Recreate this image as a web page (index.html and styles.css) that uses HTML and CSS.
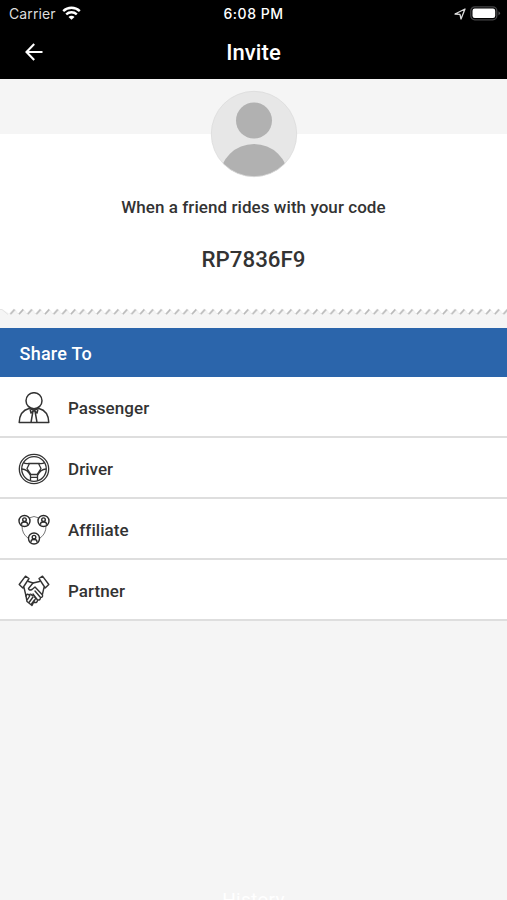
FILE: index.html
```html
<!DOCTYPE html>
<html lang="en">
<head>
<meta charset="utf-8">
<title>Invite</title>
<link rel="stylesheet" href="styles.css">
</head>
<body>
<div class="app">
  <header class="top">
    <div class="status">
      <div class="carrier"><span>Carrier</span>
        <svg width="19" height="14" viewBox="0 0 19 14"><g fill="none" stroke="#fff" stroke-width="2.4"><path d="M1.2 5.1a12 12 0 0 1 16.6 0"/><path d="M4.2 8.4a7.7 7.7 0 0 1 10.6 0"/></g><path fill="#fff" d="M9.5 13.8 6.5 10.9a4.2 4.2 0 0 1 6 0z"/></svg>
      </div>
      <div class="time">6:08 PM</div>
      <div class="indicators">
        <svg width="12" height="12" viewBox="0 0 12 12"><path d="M1 6 11 1 7 11 6 6.4z" fill="none" stroke="#ddd" stroke-width="1.3" stroke-linejoin="round"/></svg>
        <svg width="31" height="15" viewBox="0 0 31 15"><rect x=".8" y=".8" width="26" height="13" rx="4" fill="none" stroke="#454547" stroke-width="1.3"/><rect x="2.5" y="2.5" width="22.700" height="9.500" rx="2.200" fill="#fff"/><path d="M28.500 5.200q3 2.100 0 4.200z" fill="#58585a"/></svg>
      </div>
    </div>
    <div class="nav">
      <svg class="back" width="18" height="18" viewBox="0 0 18 18"><path d="M17.500 9H1.800M9.200 1 1.500 9 9.200 17" fill="none" stroke="#fff" stroke-width="2.100"/></svg>
      <h1>Invite</h1>
    </div>
  </header>
  <section class="card">
    <svg class="avatar" width="88" height="88" viewBox="0 0 88 88"><defs><clipPath id="face"><circle cx="44" cy="44" r="42.700"/></clipPath></defs><circle cx="44" cy="44" r="42.700" fill="#e7e7e7"/><g clip-path="url(#face)" fill="#b1b1b1"><circle cx="44" cy="30.500" r="18"/><ellipse cx="44" cy="87" rx="34" ry="33"/></g><circle cx="44" cy="44" r="42.700" fill="none" stroke="#dadada" stroke-width=".8"/></svg>
    <p class="lead">When a friend rides with your code</p>
    <p class="code">RP7836F9</p>
  </section>
  <svg class="edge" width="507" height="20" viewBox="0 0 507 20">
    <defs><pattern id="teeth" x="9.500" y="0" width="8.650" height="10" patternUnits="userSpaceOnUse"><path d="M0 0H8.650V6.500L5 1.500.5 6.500 0 6z" fill="#fff"/><path d="M.8 6.300 5.200 1.400" stroke="#b9b9b9" stroke-width="1.700"/><path d="M5.200 1.400 8.600 6" stroke="#e6e6e6" stroke-width=".7"/></pattern></defs>
    <path d="M0 0H10V6L3 1.500H0z" fill="#fff"/><path d="M0 1.500h2L8 6.500" fill="none" stroke="#e4e4e4"/><rect x="9.500" width="498" height="10" fill="url(#teeth)"/>
  </svg>
  <h2>Share To</h2>
  <ul>
    <li><svg width="32" height="32" viewBox="0 0 32 32"><g fill="none" stroke="#333" stroke-width="1.500" stroke-linejoin="round"><circle cx="16" cy="8.700" r="8"/><path d="M11 16.500C5 18 1.500 22 1.200 30.500H30.800C30.500 22 27 18 21 16.500M10.500 16.500 16 18l5.500-1.500M12 17l1 4 2.200-2M20 17l-1 4-2.200-2M15 19h2l2 11.300M15 19l-2 11.300"/></g></svg><span>Passenger</span></li>
    <li><svg width="32" height="32" viewBox="0 0 32 32"><g fill="none" stroke="#333" stroke-width="1.300" stroke-linejoin="round"><circle cx="16" cy="16" r="14.700"/><circle cx="16" cy="16" r="12.300"/><path d="M5.500 9.500Q7 11 11 10.500H21Q25 11 26.500 9.500M3.800 16Q9.500 16 12.500 22.500V27.500M28.200 16Q22.500 16 19.500 22.500V27.500M11.500 10.500 9 15.500 13 21.500H19L23 15.500 20.500 10.500M12.500 24.300h7"/></g></svg><span>Driver</span></li>
    <li><svg width="32" height="32" viewBox="0 0 32 32"><path d="M11 4Q16 1 21 4M4 12Q4 20 10 24M28 12Q28 20 22 24" fill="none" stroke="#777" stroke-width="1"/><g fill="none" stroke="#2b2b2b" stroke-width="1.400"><g id="member"><circle cx="6.500" cy="7" r="5.500"/><circle cx="6.500" cy="5.700" r="1.800"/><path d="M3.600 10.800V9.500Q3.800 8 6.500 8T9.400 9.500V10.800"/></g><use href="#member" x="19"/><use href="#member" x="9.500" y="17.500"/></g></svg><span>Affiliate</span></li>
    <li><svg width="32" height="32" viewBox="0 0 32 32"><g fill="none" stroke="#333" stroke-width="1.400" stroke-linejoin="round" stroke-linecap="round"><path d="M1.200 9.500 7.500 1.200 11 3.500 4.800 13zM30.800 9.500 24.500 1.200 21 3.500 27.200 13zM10.500 6.500 15 8l6.500-1.500M6 12.500 8 21M26 12.500 24.500 19"/><path d="M15 8l-4.500 5.500Q11 16 14 14.500L17 12l7.500 8q.5 2.500-2 2.500M17 16l5.500 6.500q0 3-3 2.500M15 19l4.500 6q0 3-3 2.500M8 21q1-3 3-1 2-2 3 .5 2.500-1 2.500 1.500 2 .5.500 2.500L14 30.500 9 26.500zM9.500 24.500l2.500-4M11 27.500l4-5.500M13.500 29l3-4"/></g></svg><span>Partner</span></li>
  </ul>
  <footer>History</footer>
</div>
</body>
</html>
```
FILE: styles.css
```css
* { box-sizing: border-box; }
body { margin: 0; background: #f5f5f5; font-family: Roboto, sans-serif; color: #333; }
h1, h2, p, ul { margin: 0; padding: 0; font-weight: 500; }
svg { display: block; flex: none; }
.app { height: 900px; overflow: hidden; display: flex; flex-direction: column; }
.top { height: 79px; flex: none; background: #000; color: #fff; }
.status { height: 27px; display: grid; grid-template-columns: 1fr auto 1fr; align-items: center; font-family: Inter, sans-serif; font-size: 14px; }
.carrier { display: flex; align-items: center; gap: 6px; padding-left: 9px; color: #ddd; letter-spacing: 0.1px; }
.carrier svg { margin-top: -1px; }
.time { font-size: 14px; font-weight: 500; letter-spacing: 0.5px; }
.indicators { display: flex; align-items: center; justify-content: flex-end; gap: 4px; padding-right: 6px; }
.nav { height: 50px; display: grid; grid-template-columns: 1fr auto 1fr; align-items: center; }
.back { margin-left: 25px; }
h1 { font-size: 22px; letter-spacing: 0.1px; }
.card { height: 229px; flex: none; padding-top: 11px; display: flex; flex-direction: column; align-items: center; background: linear-gradient(#f5f5f5 55px, #fff 55px); }
.lead { margin-top: 18px; font-size: 17px; line-height: 22px; letter-spacing: 0.06px; }
.code { margin-top: 26px; font-size: 22.3px; line-height: 30px; }
.edge { flex: none; }
h2 { height: 49px; flex: none; padding-left: 19.5px; background: #2b65ab; color: #fff; font-size: 18px; line-height: 51px; letter-spacing: 0.25px; }
ul { list-style: none; flex: none; }
li { height: 61px; display: flex; align-items: center; gap: 18px; padding: 1px 0 0 18px; background: #fff; border-bottom: 2px solid #dedede; font-size: 17px; letter-spacing: 0.05px; }
li span { padding-top: 2px; }
li svg { margin-top: 2px; }
footer { margin-top: 267px; flex: none; text-align: center; color: #fff; font-size: 19px; line-height: 24px; letter-spacing: 0.3px; }
```
